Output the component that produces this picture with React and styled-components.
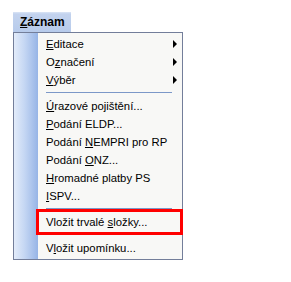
import React from "react";
import styled, { createGlobalStyle } from "styled-components";

const Global = createGlobalStyle`
  html, body { margin: 0; padding: 0; background: #ffffff; }
  body { font-family: "Liberation Sans", Arial, sans-serif; font-size: 12px; color: #000; }
`;

const Page = styled.div`
  padding: 12px 0 0 13px;
  width: 291px;
  height: 282px;
  box-sizing: border-box;
`;

const MenuHeader = styled.div`
  width: 58px;
  height: 20px;
  box-sizing: border-box;
  padding-left: 7px;
  display: flex;
  align-items: center;
  font-weight: bold;
  font-size: 12px;
  background: linear-gradient(to bottom, #dbe5f5 0px, #c3d3ee 2px, #b7cbeb 100%);
`;

const Dropdown = styled.div`
  position: relative;
  width: 170px;
  box-sizing: border-box;
  border: 1px solid #737e9a;
  background: #f8f8f6;
  display: flex;
`;

const Strip = styled.div`
  width: 24px;
  flex: none;
  background: linear-gradient(to right, #e3ecfa 0%, #c4d6f3 45%, #96b4e6 100%);
`;

const List = styled.div`
  flex: 1;
  padding: 2px 0 2px 0;
  display: flex;
  flex-direction: column;
  font-size: 11.3px;
`;

const Row = styled.div`
  height: 18px;
  display: flex;
  align-items: center;
  padding-left: 8px;
  padding-right: 5px;
  white-space: nowrap;
`;

const Label = styled.span`
  flex: 1;
`;

const U = styled.span`
  text-decoration: underline;
  text-underline-offset: 1px;
`;

const Arrow = styled.span`
  width: 0;
  height: 0;
  border-top: 4px solid transparent;
  border-bottom: 4px solid transparent;
  border-left: 4px solid #000;
`;

const Separator = styled.div`
  height: 8px;
  display: flex;
  align-items: flex-start;
  padding-left: 8px;
  padding-right: 10px;
  &::after {
    content: "";
    margin-top: 3px;
    height: 1px;
    flex: 1;
    background: #7c98c8;
  }
`;

const Highlight = styled.div`
  position: absolute;
  left: 22px;
  top: 176px;
  width: 147px;
  height: 26px;
  box-sizing: border-box;
  border: 3px solid #ff0000;
  pointer-events: none;
`;

const Item = ({ pre, u, post, sub }) => (
  <Row>
    <Label>
      {pre}
      <U>{u}</U>
      {post}
    </Label>
    {sub && <Arrow />}
  </Row>
);

export default function App() {
  return (
    <>
      <Global />
      <Page>
        <MenuHeader>
          <span>
            <U>Z</U>áznam
          </span>
        </MenuHeader>
        <Dropdown>
          <Strip />
          <List>
            <Item u="E" post="ditace" sub />
            <Item pre="O" u="z" post="načení" sub />
            <Item u="V" post="ýběr" sub />
            <Separator />
            <Item u="Ú" post="razové pojištění..." />
            <Item u="P" post="odání ELDP..." />
            <Item pre="Podání " u="N" post="EMPRI pro RP" />
            <Item pre="Podání " u="O" post="NZ..." />
            <Item u="H" post="romadné platby PS" />
            <Item u="I" post="SPV..." />
            <Separator />
            <Item pre="Vložit trvalé " u="s" post="ložky..." />
            <Separator />
            <Item pre="V" u="l" post="ožit upomínku..." />
          </List>
          <Highlight />
        </Dropdown>
      </Page>
    </>
  );
}
